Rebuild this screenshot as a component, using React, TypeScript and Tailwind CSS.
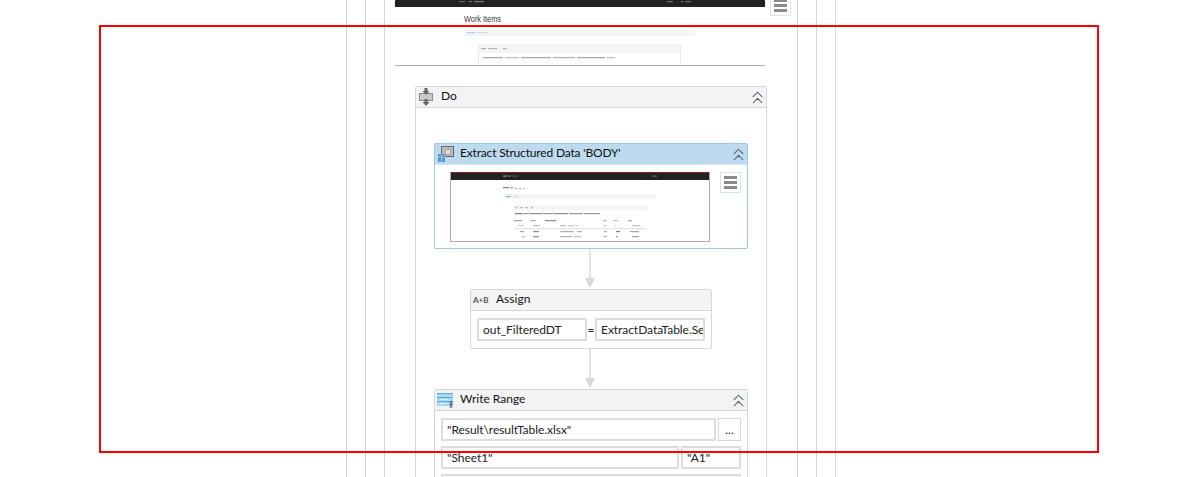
import { ChevronsUp } from 'lucide-react';
import type { ReactNode } from 'react';

const font = { fontFamily: 'Lato, "Open Sans", sans-serif' };

// blurry marks standing in for the text of the tiny previews: x, y, width, colour
const thumbMarks: [number, number, number, string][] = [
  [53, 3.500, 4, '#bbb'], [58, 3.500, 3, '#999'], [62, 3.500, 6, '#666'],
  [195, 3.500, 1, '#999'], [202, 3.500, 5, '#888'],
  [53, 15, 6, '#555'], [60, 15, 3, '#777'], [65, 16, 2, '#999'], [69, 16, 2, '#999'], [73, 16, 2, '#aaa'],
  [56, 24, 5, '#6aa0cc'], [63, 24, 5, '#ccc'],
  [65, 35, 3, '#aaa'], [70, 35, 3, '#aaa'], [75, 35, 3, '#aaa'], [81, 35, 2, '#aaa'],
  [65, 41, 7, '#555'], [73, 41, 6, '#777'], [80, 41, 12, '#666'], [93, 41, 10, '#777'], [104, 41, 14, '#666'], [119, 41, 14, '#777'], [134, 41, 16, '#777'],
  [64, 48, 8, '#888'], [80, 48, 6, '#999'], [95, 48, 11, '#666'], [153, 48, 4, '#999'], [163, 48, 5, '#aaa'], [178, 48, 4, '#888'],
  [68, 53, 6, '#bbb'], [83, 53, 7, '#aaa'], [110, 53, 6, '#aaa'], [118, 53, 6, '#bbb'], [125, 53, 4, '#bbb'], [154, 53, 2, '#aaa'], [165, 53, 1, '#bbb'], [182, 53, 8, '#aaa'],
  [70, 59, 4, '#888'], [83, 59, 6, '#666'], [110, 59, 14, '#999'], [127, 59, 5, '#999'], [154, 59, 3, '#888'], [166, 59, 4, '#555'], [180, 59, 9, '#888'],
  [72, 64, 3, '#aaa'], [83, 64, 6, '#666'], [110, 64, 12, '#999'], [124, 64, 7, '#aaa'], [154, 64, 3, '#999'], [166, 64, 2, '#777'], [182, 64, 7, '#888'],
];

const topMarks: [number, number, number, string][] = [
  [64, 1, 6, '#888'], [74, 1, 3, '#999'], [79, 1, 10, '#aaa'],
  [272, 1, 6, '#999'], [286, 1, 2, '#999'], [290, 1, 6, '#999'],
  [72, 32, 8, '#8ab4d8'], [82, 32, 10, '#ccc'],
  [86, 48, 5, '#888'], [93, 48, 9, '#999'], [108, 48, 4, '#999'],
  [88, 57, 20, '#777'], [110, 57, 14, '#999'], [126, 57, 30, '#777'], [158, 57, 22, '#888'], [182, 57, 28, '#777'], [212, 57, 8, '#999'],
];

function MenuButton({ className }: { className: string }) {
  return (
    <div className={`flex flex-col items-center justify-center gap-[2px] border border-[#d9e2ea] bg-white ${className}`}>
      <div className="h-[3px] w-[13px] bg-[#8a8a8a]" />
      <div className="h-[3px] w-[13px] bg-[#8a8a8a]" />
      <div className="h-[3px] w-[13px] bg-[#8a8a8a]" />
    </div>
  );
}

function TopPreview() {
  return (
    <svg width="370" height="66" viewBox="0 0 370 66" className="block shrink-0">
      <rect x="0" y="0" width="370" height="7" fill="#222" />
      <text x="69" y="22" fontSize="9" fill="#222" opacity="0.9" textLength="37" lengthAdjust="spacingAndGlyphs" fontFamily="Liberation Sans">Work Items</text>
      <rect x="69" y="29" width="231" height="7" rx="1" fill="#f5f5f5" />
      <rect x="83.500" y="45" width="202" height="21" fill="#fff" stroke="#e8e8e8" />
      <rect x="84" y="45" width="201" height="8" fill="#f5f5f5" />
      <g opacity="0.65">
        {topMarks.map(([x, y, w, c], i) => (
          <rect key={i} x={x} y={y} width={w} height="1.2" fill={c} />
        ))}
      </g>
      <rect x="0" y="65" width="370" height="1" fill="#a8a8a8" />
    </svg>
  );
}

function Thumbnail() {
  return (
    <svg width="260" height="70" viewBox="0 0 260 70" className="block shrink-0">
      <rect x="0" y="0" width="260" height="70" fill="#a9a9a9" />
      <rect x="1" y="1" width="258" height="68" fill="#fff" />
      <rect x="1" y="0" width="258" height="1" fill="#7d2020" />
      <rect x="1" y="1" width="258" height="7" fill="#222" />
      <rect x="54" y="22" width="152" height="5" fill="#f5f5f5" />
      <rect x="63" y="33" width="134" height="5" fill="#f5f5f5" />
      <rect x="64" y="56.500" width="132" height="0.7" fill="#ccc" />
      <g opacity="0.75">
        {thumbMarks.map(([x, y, w, c], i) => (
          <rect key={i} x={x} y={y} width={w} height="1.2" fill={c} />
        ))}
      </g>
    </svg>
  );
}

function DoIcon() {
  return (
    <svg width="16" height="18" viewBox="0 0 16 18" className="shrink-0">
      <rect x="1.500" y="5.500" width="13" height="7" fill="#c9c9c9" stroke="#8a8a8a" />
      <path d="M6.500 0h3v3h2L8 7 4.500 3h2zM6.500 11h3v3h2L8 18l-3.500-4h2z" fill="#666" />
    </svg>
  );
}

function ExtractIcon() {
  return (
    <svg width="18" height="18" viewBox="0 0 18 18" className="shrink-0">
      <rect x="4.500" y="1.500" width="12" height="10" fill="#bdbdbd" stroke="#666" />
      <circle cx="11" cy="7" r="3" fill="#dcdcdc" stroke="#a0a0a0" />
      <rect x="1" y="9" width="7" height="8" fill="#5b95c9" />
      <path d="M1 12h7M4.500 9v8" stroke="#a8cde8" strokeWidth="0.8" />
    </svg>
  );
}

function TableIcon() {
  return (
    <svg width="17" height="15" viewBox="0 0 17 15" className="shrink-0">
      <rect x="0" y="0" width="16" height="13" fill="#a6d8f2" />
      <path d="M0 .5h16M0 4.500h16M0 8.500h16" stroke="#5aa6d8" />
      <path d="M3 6.500h8M3 10.500h6" stroke="#d8eefa" />
      <path d="M14 8v6M12.500 9h3M12.500 11.500h3M12.500 14h3" stroke="#555" />
    </svg>
  );
}

function Connector() {
  return (
    <div className="mb-[1px] flex shrink-0 flex-col items-center pr-[2px]">
      <div className="h-[29px] w-[2px] bg-[#e2e2e2]" />
      <div className="h-0 w-0 border-x-[5px] border-t-[10px] border-x-transparent border-t-[#d9d9d9]" />
    </div>
  );
}

function Card({
  icon,
  title,
  className,
  collapse = true,
  blue = false,
  children,
}: {
  icon: ReactNode;
  title: string;
  className: string;
  collapse?: boolean;
  blue?: boolean;
  children: ReactNode;
}) {
  return (
    <div className={`shrink-0 rounded-[2px] border bg-white ${blue ? 'border-[#9cc7e6]' : 'border-[#d6d6d6]'} ${className}`}>
      <div className={`flex h-[21px] items-center border-b pl-[2px] pr-[2px] ${blue ? 'border-[#d4e6f3] bg-[#bddaee]' : 'border-[#d6d6d6] bg-[#f3f3f3]'}`}>
        <div className="flex w-[23px] shrink-0 items-center">{icon}</div>
        <span className={`mt-[-2px] text-[12px] leading-[18px] text-[#111] ${blue ? 'tracking-[-0.17px]' : ''}`}>{title}</span>
        {collapse && <ChevronsUp className="ml-auto mr-[-4px] h-[21px] w-[21px] text-[#4f5b66]" strokeWidth={1.2} />}
      </div>
      {children}
    </div>
  );
}

function Field({ value, className }: { value: string; className: string }) {
  return (
    <div className={`h-[23px] shrink-0 overflow-hidden whitespace-nowrap border-2 border-[#dcdcdc] bg-white px-1 text-[12px] leading-[19px] tracking-[-0.05px] text-[#222] ${className}`}>
      {value}
    </div>
  );
}

export default function App() {
  return (
    <div className="relative h-[477px] w-[1198px] overflow-hidden bg-white" style={font}>
      {/* nested sequence containers */}
      <div className="ml-[346px] h-[477px] w-[490px] border-x border-[#d6d6d6] px-[18px]">
        <div className="h-full border-x border-[#d6d6d6] px-[18px]">
          <div className="flex h-full flex-col border-x border-[#d6d6d6] pl-[10px]">
            <div className="flex shrink-0 items-start gap-[5px]">
              <TopPreview />
              <MenuButton className="mt-[-5px] h-[21px] w-[21px]" />
            </div>

            <Card icon={<DoIcon />} title="Do" className="ml-[20px] mt-[20px] w-[352px]">
              <div className="flex flex-col items-center pt-[35px]">
                <Card icon={<ExtractIcon />} title="Extract Structured Data 'BODY'" className="w-[314px]" blue>
                  <div className="flex items-start gap-[10px] pb-[6px] pl-[15px] pt-[7px]">
                    <Thumbnail />
                    <MenuButton className="h-[21px] w-[21px]" />
                  </div>
                </Card>

                <Connector />

                <Card
                  icon={<span className="text-[8px] font-bold text-[#555]">A+B</span>}
                  title="Assign"
                  className="w-[242px]"
                  collapse={false}
                >
                  <div className="flex items-center px-[6px] py-[7px]">
                    <Field value="out_FilteredDT" className="w-[110px]" />
                    <span className="w-[8px] text-center text-[12px] leading-none text-[#222]">=</span>
                    <Field value="ExtractDataTable.Select" className="w-[110px]" />
                  </div>
                </Card>

                <Connector />

                <Card icon={<TableIcon />} title="Write Range" className="w-[314px]">
                  <div className="flex flex-col gap-[5px] px-[6px] pb-[7px] pt-[7px]">
                    <div className="flex gap-[2px]">
                      <Field value={'"Result\\resultTable.xlsx"'} className="w-[275px]" />
                      <div className="flex h-[23px] w-[23px] items-center justify-center border border-[#d6d6d6] text-[12px] text-[#222]">...</div>
                    </div>
                    <div className="flex gap-[2px]">
                      <Field value={'"Sheet1"'} className="w-[238px]" />
                      <Field value={'"A1"'} className="w-[60px]" />
                    </div>
                    <Field value="" className="w-[300px]" />
                  </div>
                </Card>
              </div>
            </Card>
          </div>
        </div>
      </div>

      {/* red selection frame over the canvas */}
      <div className="pointer-events-none absolute left-[99px] top-[25px] h-[428px] w-[1000px] border-2 border-[#ff0000]" />
    </div>
  );
}
